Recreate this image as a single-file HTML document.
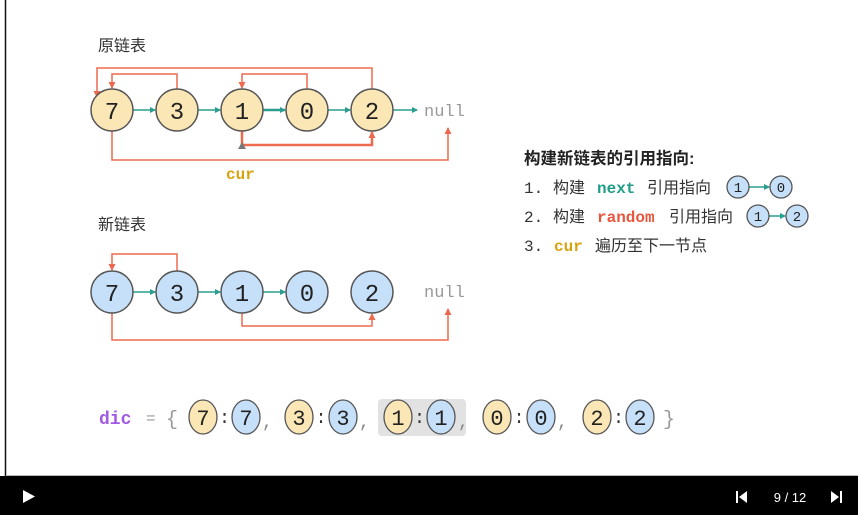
<!DOCTYPE html>
<html><head><meta charset="utf-8"><style>
html,body{margin:0;padding:0;background:#fff;}
body{width:858px;height:515px;overflow:hidden;position:relative;}
svg{position:absolute;left:0;top:0;}
.m{font-family:"Liberation Mono","DejaVu Sans Mono",monospace;}
.c{font-family:"Liberation Sans","Noto Sans CJK SC",sans-serif;}
</style></head><body>
<svg width="858" height="515" viewBox="0 0 858 515">
<defs>
<marker id="ta" markerWidth="6" markerHeight="6" refX="5" refY="3" orient="auto" markerUnits="userSpaceOnUse"><path d="M0,0 L6,3 L0,6 z" fill="#2a9d8f"/></marker>
<marker id="ra" markerWidth="7" markerHeight="7" refX="6" refY="3.5" orient="auto" markerUnits="userSpaceOnUse"><path d="M0,0 L7,3.5 L0,7 z" fill="#ee6a4f"/></marker>
</defs>
<rect x="0" y="0" width="858" height="515" fill="#fff"/>
<line x1="5.5" y1="0" x2="5.5" y2="476" stroke="#111" stroke-width="1.5"/>
<line x1="6" y1="475.5" x2="858" y2="475.5" stroke="#bbb" stroke-width="1"/>

<text x="98" y="51" class="c" font-size="16" fill="#333">原链表</text>
<text x="98" y="230" class="c" font-size="16" fill="#333">新链表</text>

<g fill="none" stroke="#ee6a4f" stroke-width="1.5">
<polyline points="372,89 372,68 97,68 97,97" marker-end="url(#ra)"/>
<polyline points="177,89 177,74 112,74 112,88" marker-end="url(#ra)"/>
<polyline points="307,89 307,74 242,74 242,88" marker-end="url(#ra)"/>
<polyline points="112,131 112,160 448,160 448,128" marker-end="url(#ra)"/>
<polyline points="242,131 242,145 372,145 372,132" stroke-width="2.5" marker-end="url(#ra)"/>
</g>
<path d="M238,149 L242,142 L246,149 z" fill="#777"/>
<g stroke="#2a9d8f" stroke-width="1.5">
<line x1="133" y1="110" x2="155" y2="110" marker-end="url(#ta)"/>
<line x1="198" y1="110" x2="220" y2="110" marker-end="url(#ta)"/>
<line x1="263" y1="110" x2="285" y2="110" stroke-width="2.5" marker-end="url(#ta)"/>
<line x1="328" y1="110" x2="350" y2="110" marker-end="url(#ta)"/>
<line x1="393" y1="110" x2="417" y2="110" marker-end="url(#ta)"/>
</g>
<g fill="#fbe7b5" stroke="#555" stroke-width="1.5">
<circle cx="112" cy="110" r="21"/><circle cx="177" cy="110" r="21"/><circle cx="242" cy="110" r="21"/><circle cx="307" cy="110" r="21"/><circle cx="372" cy="110" r="21"/>
</g>
<g class="m" font-size="24" fill="#222" text-anchor="middle">
<text x="112" y="119">7</text><text x="177" y="119">3</text><text x="242" y="119">1</text><text x="307" y="119">0</text><text x="372" y="119">2</text>
</g>
<text x="424" y="116" class="m" font-size="17" fill="#999">null</text>
<text x="226" y="179" class="m" font-size="16" font-weight="bold" fill="#d9a20f">cur</text>

<g fill="none" stroke="#ee6a4f" stroke-width="1.5">
<polyline points="177,271 177,254 112,254 112,270" marker-end="url(#ra)"/>
<polyline points="242,313 242,326 372,326 372,314" marker-end="url(#ra)"/>
<polyline points="112,313 112,340 448,340 448,309" marker-end="url(#ra)"/>
</g>
<g stroke="#2a9d8f" stroke-width="1.5">
<line x1="133" y1="292" x2="155" y2="292" marker-end="url(#ta)"/>
<line x1="198" y1="292" x2="220" y2="292" marker-end="url(#ta)"/>
<line x1="263" y1="292" x2="285" y2="292" marker-end="url(#ta)"/>
</g>
<g fill="#c6e0fa" stroke="#555" stroke-width="1.5">
<circle cx="112" cy="292" r="21"/><circle cx="177" cy="292" r="21"/><circle cx="242" cy="292" r="21"/><circle cx="307" cy="292" r="21"/><circle cx="372" cy="292" r="21"/>
</g>
<g class="m" font-size="24" fill="#222" text-anchor="middle">
<text x="112" y="301">7</text><text x="177" y="301">3</text><text x="242" y="301">1</text><text x="307" y="301">0</text><text x="372" y="301">2</text>
</g>
<text x="424" y="297" class="m" font-size="17" fill="#999">null</text>

<!-- right text -->
<text x="524" y="164" class="c" font-size="16.5" font-weight="bold" fill="#222">构建新链表的引用指向:</text>
<g class="c" font-size="16" fill="#333">
<text x="524" y="193" class="m">1.</text><text x="553" y="193">构建</text><text x="597" y="193" class="m" font-weight="bold" fill="#1f9e89">next</text><text x="647" y="193">引用指向</text>
<text x="524" y="222" class="m">2.</text><text x="553" y="222">构建</text><text x="597" y="222" class="m" font-weight="bold" fill="#e8573d">random</text><text x="669" y="222">引用指向</text>
<text x="524" y="251" class="m">3.</text><text x="554" y="251" class="m" font-weight="bold" fill="#d9a20f">cur</text><text x="595" y="251">遍历至下一节点</text>
</g>
<g stroke="#2a9d8f" stroke-width="1.5">
<line x1="749" y1="187" x2="769" y2="187" marker-end="url(#ta)"/>
<line x1="769" y1="216" x2="785" y2="216" marker-end="url(#ta)"/>
</g>
<g fill="#c6e0fa" stroke="#555" stroke-width="1.3">
<circle cx="738" cy="187" r="11"/><circle cx="781" cy="187" r="11"/><circle cx="758" cy="216" r="11"/><circle cx="797" cy="216" r="11"/>
</g>
<g class="m" font-size="14" fill="#222" text-anchor="middle">
<text x="738" y="192">1</text><text x="781" y="192">0</text><text x="758" y="221">1</text><text x="797" y="221">2</text>
</g>

<!-- dic -->
<rect x="378" y="399" width="88" height="37" rx="4" fill="#e2e2e2"/>
<text x="99" y="424" class="m" font-size="18" font-weight="bold" fill="#a259e6">dic</text>
<text x="146" y="423" class="m" font-size="16" fill="#999">=</text>
<text x="166" y="425" class="m" font-size="20" fill="#999">{</text>
<text x="663" y="425" class="m" font-size="20" fill="#999">}</text>
<g stroke="#555" stroke-width="1.3">
<ellipse cx="203" cy="417" rx="14" ry="17" fill="#fbe7b5"/><ellipse cx="246" cy="417" rx="14" ry="17" fill="#c6e0fa"/>
<ellipse cx="299" cy="417" rx="14" ry="17" fill="#fbe7b5"/><ellipse cx="343" cy="417" rx="14" ry="17" fill="#c6e0fa"/>
<ellipse cx="398" cy="417" rx="14" ry="17" fill="#fbe7b5"/><ellipse cx="441" cy="417" rx="14" ry="17" fill="#c6e0fa"/>
<ellipse cx="497" cy="417" rx="14" ry="17" fill="#fbe7b5"/><ellipse cx="541" cy="417" rx="14" ry="17" fill="#c6e0fa"/>
<ellipse cx="597" cy="417" rx="14" ry="17" fill="#fbe7b5"/><ellipse cx="640" cy="417" rx="14" ry="17" fill="#c6e0fa"/>
</g>
<g class="m" font-size="22" fill="#222" text-anchor="middle">
<text x="203" y="425">7</text><text x="246" y="425">7</text>
<text x="299" y="425">3</text><text x="343" y="425">3</text>
<text x="398" y="425">1</text><text x="441" y="425">1</text>
<text x="497" y="425">0</text><text x="541" y="425">0</text>
<text x="597" y="425">2</text><text x="640" y="425">2</text>
</g>
<g class="m" font-size="18" fill="#333" text-anchor="middle">
<text x="224.5" y="423">:</text><text x="321" y="423">:</text><text x="419.5" y="423">:</text><text x="519" y="423">:</text><text x="618.5" y="423">:</text>
</g>
<g class="m" font-size="18" fill="#888">
<text x="262" y="427">,</text><text x="359" y="427">,</text><text x="458" y="427">,</text><text x="557" y="427">,</text>
</g>

<rect x="0" y="476" width="858" height="39" fill="#000"/>
<path d="M23,490 L35,496.5 L23,503 z" fill="#fff"/>
<rect x="736" y="491" width="2" height="12" fill="#fff"/>
<path d="M747,491 L739,497 L747,503 z" fill="#fff"/>
<text x="790" y="502" text-anchor="middle" font-family="Liberation Sans,sans-serif" font-size="13" fill="#fff">9 / 12</text>
<path d="M831,491 L839,497 L831,503 z" fill="#fff"/>
<rect x="840" y="491" width="2" height="12" fill="#fff"/>
</svg>
</body></html>
